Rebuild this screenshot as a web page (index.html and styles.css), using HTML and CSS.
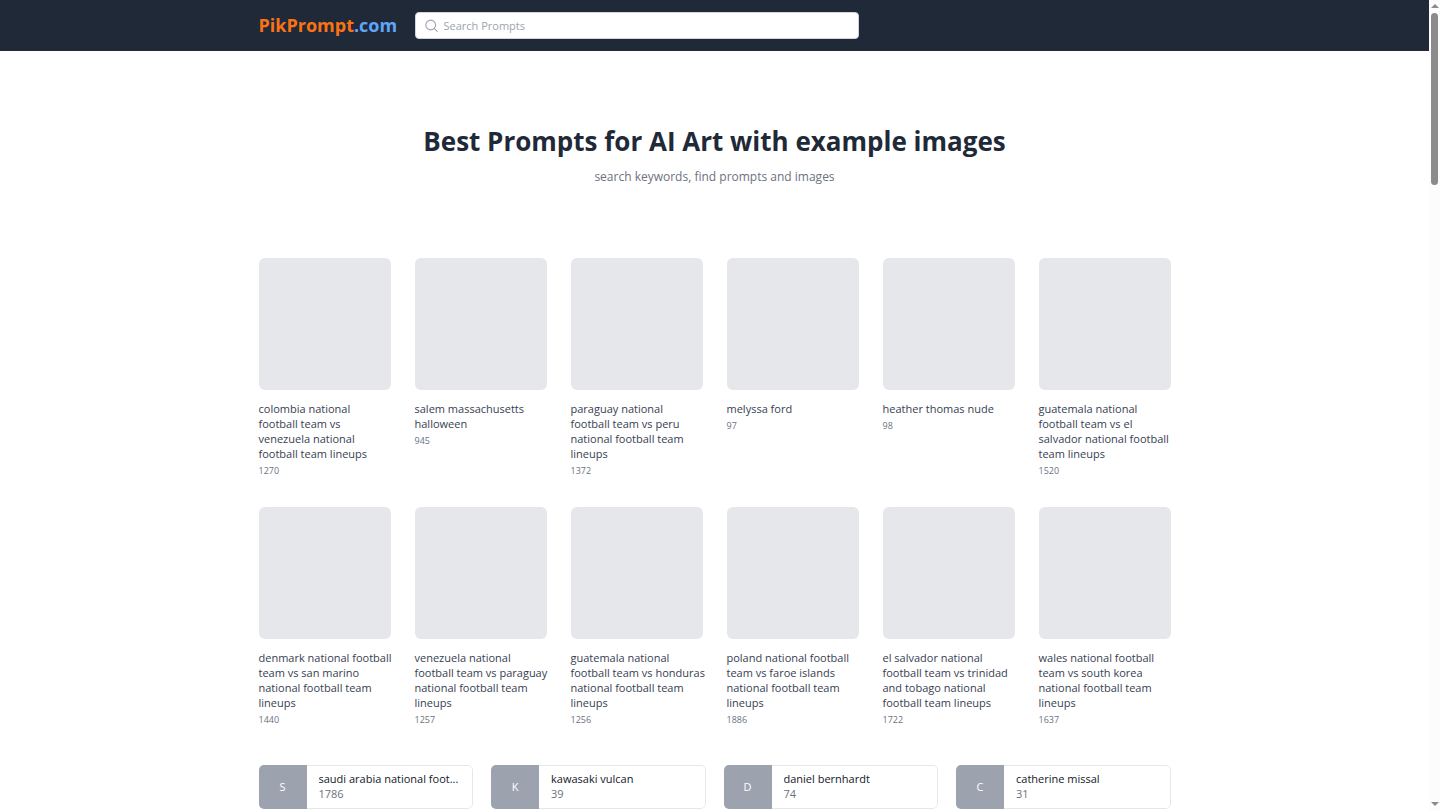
FILE: index.html
```html
<!DOCTYPE html>
<html lang="en">
<head>
<meta charset="utf-8">
<title>PikPrompt.com</title>
<link rel="stylesheet" href="styles.css">
</head>
<body>
<header class="topbar">
  <div class="container topbar-row">
    <a class="logo" href="#">PikPrompt<span class="logo-tld">.com</span></a>
    <form class="search" role="search">
      <svg class="search-icon" viewBox="0 0 24 24" fill="none" stroke="currentColor" stroke-width="2" stroke-linecap="round" stroke-linejoin="round" aria-hidden="true"><circle cx="10.5" cy="11" r="9"/><path d="M17 17.5 22.5 23"/></svg>
      <input class="search-input" type="search" placeholder="Search Prompts" aria-label="Search Prompts">
    </form>
  </div>
</header>
<main class="container">
  <section class="hero">
    <h1 class="hero-title">Best Prompts for AI Art with example images</h1>
    <p class="hero-text">search keywords, find prompts and images</p>
  </section>
  <section class="gallery">
    <a class="item" href="#"><div class="thumb"></div><h2 class="name">colombia national<br>football team vs<br>venezuela national football team lineups</h2><p class="count">1270</p></a>
    <a class="item" href="#"><div class="thumb"></div><h2 class="name">salem massachusetts halloween</h2><p class="count">945</p></a>
    <a class="item" href="#"><div class="thumb"></div><h2 class="name">paraguay national<br>football team vs peru national football team lineups</h2><p class="count">1372</p></a>
    <a class="item" href="#"><div class="thumb"></div><h2 class="name">melyssa ford</h2><p class="count">97</p></a>
    <a class="item" href="#"><div class="thumb"></div><h2 class="name">heather thomas nude</h2><p class="count">98</p></a>
    <a class="item" href="#"><div class="thumb"></div><h2 class="name">guatemala national football team vs el salvador national football team lineups</h2><p class="count">1520</p></a>
    <a class="item" href="#"><div class="thumb"></div><h2 class="name">denmark national football team vs san marino national football team lineups</h2><p class="count">1440</p></a>
    <a class="item" href="#"><div class="thumb"></div><h2 class="name">venezuela national football team vs paraguay national football team lineups</h2><p class="count">1257</p></a>
    <a class="item" href="#"><div class="thumb"></div><h2 class="name">guatemala national football team vs honduras national football team lineups</h2><p class="count">1256</p></a>
    <a class="item" href="#"><div class="thumb"></div><h2 class="name">poland national football team vs faroe islands national football team lineups</h2><p class="count">1886</p></a>
    <a class="item" href="#"><div class="thumb"></div><h2 class="name">el salvador national football team vs trinidad and tobago national football team lineups</h2><p class="count">1722</p></a>
    <a class="item" href="#"><div class="thumb"></div><h2 class="name">wales national football team vs south korea national football team lineups</h2><p class="count">1637</p></a>
  </section>
  <ul class="topics">
    <li class="topic"><span class="topic-letter">S</span><div class="topic-body"><a class="topic-name" href="#">saudi arabia national foot...</a><p class="topic-count">1786</p></div></li>
    <li class="topic"><span class="topic-letter">K</span><div class="topic-body"><a class="topic-name" href="#">kawasaki vulcan</a><p class="topic-count">39</p></div></li>
    <li class="topic"><span class="topic-letter">D</span><div class="topic-body"><a class="topic-name" href="#">daniel bernhardt</a><p class="topic-count">74</p></div></li>
    <li class="topic"><span class="topic-letter">C</span><div class="topic-body"><a class="topic-name" href="#">catherine missal</a><p class="topic-count">31</p></div></li>
  </ul>
</main>
<div class="scrollbar" aria-hidden="true">
  <svg class="arrow" viewBox="0 0 8 4"><path d="M4 0 8 4H0Z"/></svg>
  <div class="track"><div class="thumbbar"></div></div>
  <svg class="arrow" viewBox="0 0 8 4"><path d="M4 4 8 0H0Z"/></svg>
</div>
</body>
</html>
```
FILE: styles.css
```css
* { box-sizing: border-box; }
html { overflow: hidden; }
body {
  margin: 0;
  padding-right: 11px;
  background: #fff;
  color: #374151;
  font-family: "Open Sans", "Noto Sans", sans-serif;
  font-size: 11px;
  line-height: 15px;
}
h1, h2, p, ul { margin: 0; padding: 0; }
a { color: inherit; text-decoration: none; }
.container { max-width: 912px; margin: 0 auto; }

.topbar { background: #1f2937; padding: 12px 0; }
.topbar-row { display: grid; grid-template-columns: repeat(6, minmax(0, 1fr)); column-gap: 24px; align-items: center; }
.logo { color: #f97316; font-size: 18px; line-height: 27px; font-weight: 700; white-space: nowrap; }
.logo-tld { color: #60a5fa; }
.search {
  grid-column: 2 / span 3;
  display: flex;
  align-items: center;
  gap: 6px;
  height: 27px;
  padding: 0 9px;
  background: #fff;
  border: 1px solid #d1d5db;
  border-radius: 4px;
}
.search-icon { width: 13px; height: 13px; color: #9ca3af; flex: none; }
.search-input {
  flex: 1;
  min-width: 0;
  border: 0;
  padding: 0;
  outline: none;
  background: none;
  color: #374151;
  font: inherit;
}
.search-input::placeholder { color: #9ca3af; opacity: 1; }

.hero { padding: 72px 0; text-align: center; }
.hero-title { color: #1f2937; font-size: 26px; line-height: 36px; font-weight: 700; }
.hero-text { margin-top: 9px; color: #6b7280; font-size: 12px; line-height: 18px; }

.gallery { display: grid; grid-template-columns: repeat(6, minmax(0, 1fr)); gap: 29px 24px; }
.thumb { aspect-ratio: 1; background: #e5e7eb; border-radius: 6px; }
.name { margin: 11px -6px 0 0; font-size: 11px; font-weight: 400; }
.count { margin-top: 2px; color: #6b7280; font-size: 9px; }

.topics { display: grid; grid-template-columns: repeat(4, minmax(0, 1fr)); gap: 18px; margin-top: 38px; list-style: none; }
.topic { display: flex; min-height: 44px; border-radius: 5px; overflow: hidden; }
.topic-letter { display: flex; align-items: center; justify-content: center; width: 48px; flex: none; padding-bottom: 2px; background: #9ca3af; color: #fff; }
.topic-body { flex: 1; min-width: 0; padding: 5px 8px 5px 12px; border: 1px solid #e5e7eb; border-left: 0; border-radius: 0 5px 5px 0; }
.topic-name { display: block; overflow: hidden; white-space: nowrap; text-overflow: ellipsis; color: #111827; }
.topic-count { color: #6b7280; }

.scrollbar {
  position: fixed;
  top: 0;
  right: 0;
  bottom: 0;
  width: 11px;
  display: flex;
  flex-direction: column;
  align-items: center;
  gap: 5px;
  padding: 4px 0;
  background: #fcfcfc;
}
.arrow { width: 8px; height: 4px; fill: #8b8b8b; flex: none; }
.track { flex: 1; width: 7px; }
.thumbbar { height: 22%; border-radius: 4px; background: #8b8b8b; }
```
